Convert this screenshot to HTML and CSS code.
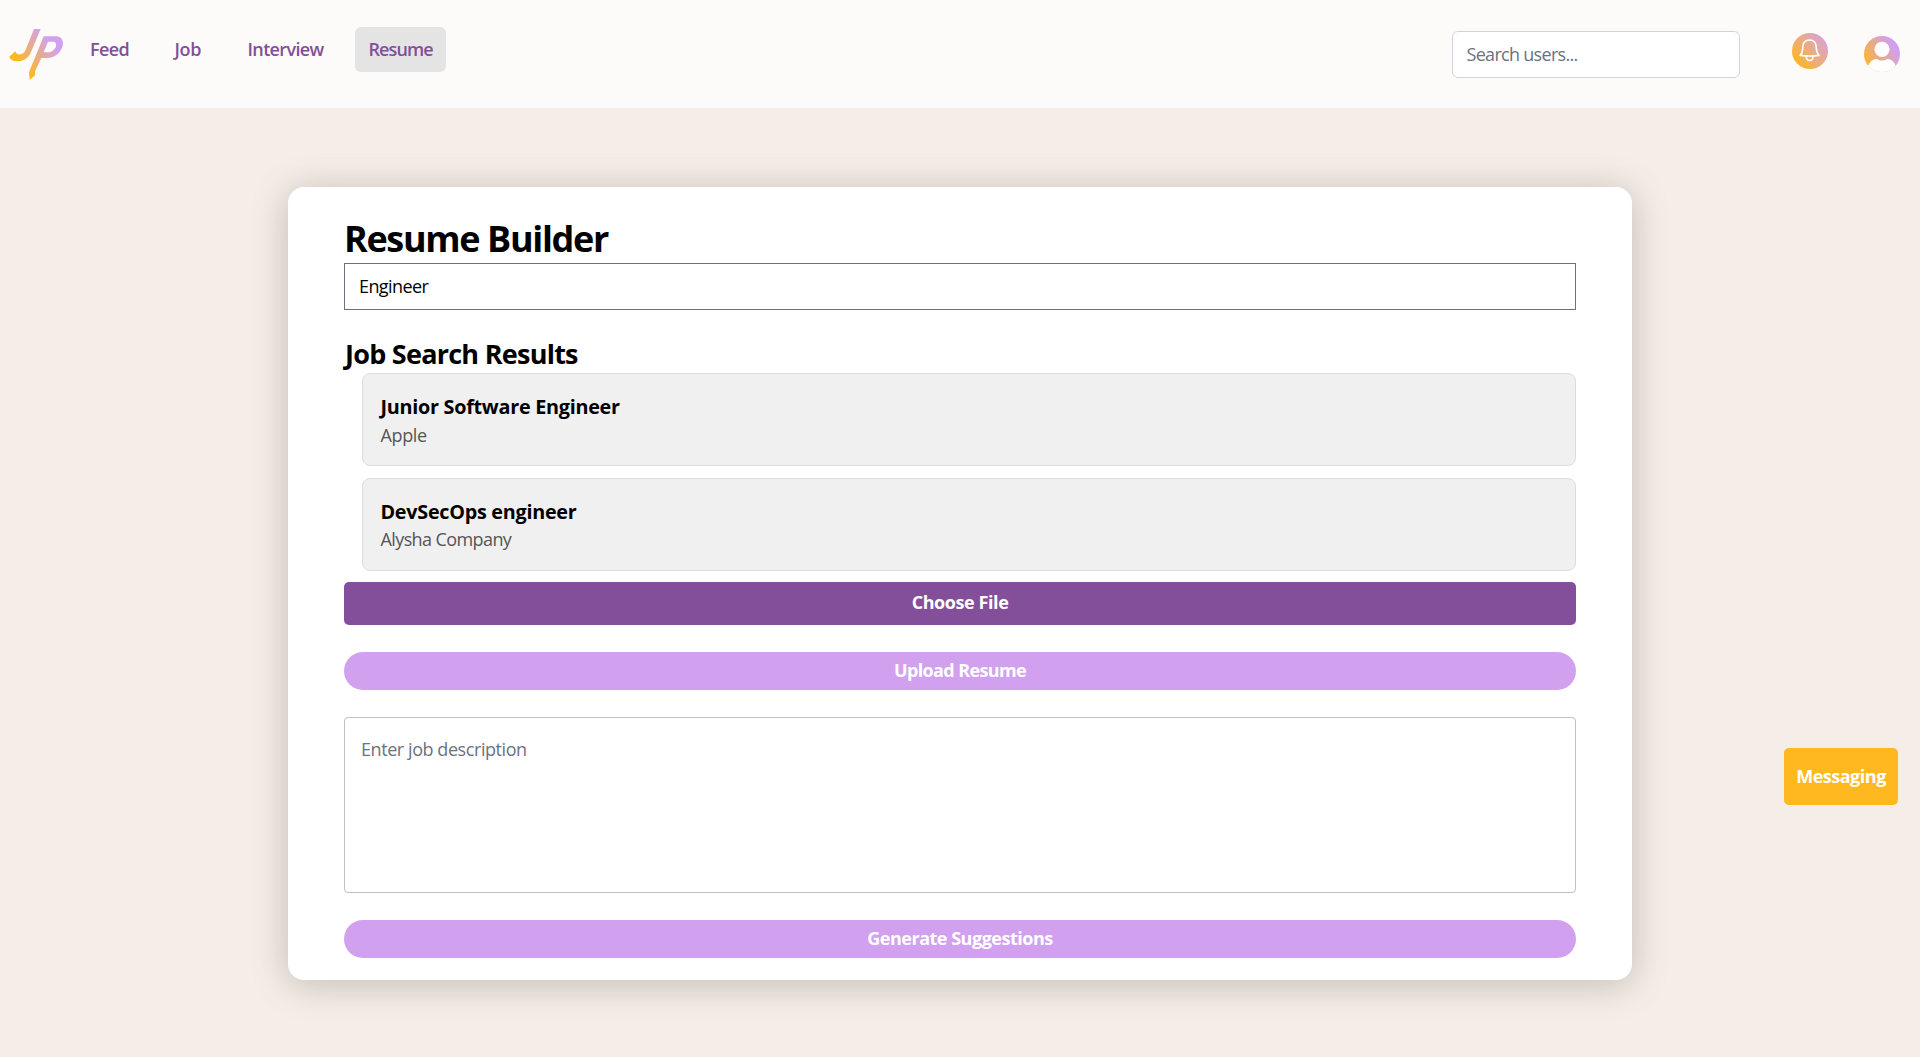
FILE: index.html
```html
<!DOCTYPE html>
<html lang="en">
<head>
<meta charset="utf-8">
<title>Resume Builder</title>
<link rel="stylesheet" href="styles.css">
</head>
<body>
<header class="header">
  <svg class="logo" viewBox="24 84 168 159" aria-label="JP">
    <defs>
      <linearGradient id="logo-fill" gradientUnits="userSpaceOnUse" x1="62" y1="194" x2="148" y2="120">
        <stop offset="0" stop-color="#ffb81f"/><stop offset="1" stop-color="#d1a1f0"/>
      </linearGradient>
    </defs>
    <path fill="url(#logo-fill)" d="M102 87H122L92 158C84 177 66 184 50 184C39 184 31 179 28 170L46 154C50 162 54 164 60 163C69 162 74 156 77 149Z"/>
    <path fill="url(#logo-fill)" fill-rule="evenodd" d="M131 109H168C184 109 192 122 188 138C182 160 162 174 140 174H124L105 214V226L89 240L87 217ZM144 125L131 157H144C157 157 166 147 168 138C170 130 166 125 160 125Z"/>
  </svg>
  <nav class="nav">
    <a class="nav-link nav-feed">Feed</a>
    <a class="nav-link nav-job">Job</a>
    <a class="nav-link nav-interview">Interview</a>
    <a class="nav-link nav-resume active">Resume</a>
  </nav>
  <input class="search" type="text" placeholder="Search users...">
  <svg class="bell" viewBox="0 0 36 36">
    <defs>
      <linearGradient id="bell-fill" x1="0.1" y1="0.85" x2="1" y2="0.1">
        <stop offset="0" stop-color="#ffb524"/><stop offset="1" stop-color="#d5a1e8"/>
      </linearGradient>
    </defs>
    <circle cx="18" cy="18" r="18" fill="url(#bell-fill)"/>
    <path fill="none" stroke="#fff" stroke-width="1.6" stroke-linejoin="round" d="M8.2 22.4C10 20.5 10.7 18.5 10.7 15C10.7 10 13.2 7 17.5 7S24.3 10 24.3 15C24.3 18.5 25.2 20.5 27 22.4C21 23.2 14.2 23.2 8.2 22.4ZM14.3 23.2C14.3 29 21 29 21 23.2"/>
  </svg>
  <svg class="avatar" viewBox="0 0 36 36">
    <defs>
      <linearGradient id="avatar-fill" x1="0" y1="0.8" x2="0.85" y2="0.3">
        <stop offset="0" stop-color="#ffb524"/><stop offset="1" stop-color="#d0a0f0"/>
      </linearGradient>
      <clipPath id="avatar-clip"><circle cx="18" cy="18" r="18"/></clipPath>
    </defs>
    <g clip-path="url(#avatar-clip)">
      <rect width="36" height="36" fill="url(#avatar-fill)"/>
      <path fill="#fff" d="M4 36V31C5 26 9 22.6 13 23C16 25 20 25 23 23C27 22.6 31 26 32 31V36Z"/>
    </g>
    <circle cx="18" cy="13.3" r="7.6" fill="#fff"/>
  </svg>
</header>
<main class="card">
  <h1 class="title">Resume Builder</h1>
  <input class="job-search" type="text" value="Engineer">
  <h2 class="subtitle">Job Search Results</h2>
  <ul class="results">
    <li class="result">
      <h3 class="job-title">Junior Software Engineer</h3>
      <p class="company company-short">Apple</p>
    </li>
    <li class="result">
      <h3 class="job-title">DevSecOps engineer</h3>
      <p class="company">Alysha Company</p>
    </li>
  </ul>
  <button class="choose">Choose File</button>
  <button class="action upload">Upload Resume</button>
  <textarea class="description" placeholder="Enter job description"></textarea>
  <button class="action">Generate Suggestions</button>
</main>
<button class="messaging">Messaging</button>
</body>
</html>
```
FILE: styles.css
```css
* {
  box-sizing: border-box;
  margin: 0;
  padding: 0;
}

body {
  height: 1057px;
  overflow: hidden;
  background: #f5ede7;
  color: #000;
  font: 400 18px/27px "Open Sans", "Noto Sans", sans-serif;
}

button,
input,
textarea {
  font: inherit;
  border: 0;
}

.header {
  display: flex;
  align-items: flex-start;
  height: 108px;
  padding: 27px 20px 0 8px;
  background: #fcfbf9;
}

.logo {
  width: 56px;
  height: 53px;
  margin-top: 1px;
}

.nav {
  display: flex;
  gap: 18px;
  margin-left: 12.5px;
}

.nav-link {
  height: 45px;
  padding: 9px 0 0 13.5px;
  border-radius: 6px;
  color: #834e9a;
  font-weight: 600;
  line-height: 26px;
  letter-spacing: -0.6px;
  white-space: nowrap;
}

.nav-feed { width: 67.5px; }
.nav-job { width: 54px; padding-left: 12.5px; letter-spacing: -0.3px; }
.nav-interview { width: 103px; letter-spacing: -0.65px; }
.nav-resume { width: 91px; letter-spacing: -0.9px; }

.active {
  background: #e4e4e4;
}

.search {
  width: 288px;
  height: 47px;
  margin: 4px 52px 0 auto;
  padding: 0 13.5px 2px;
  border: 1px solid #d1d5db;
  border-radius: 6px;
  background: #fff;
  letter-spacing: -0.7px;
}

.search::placeholder,
.description::placeholder {
  color: #6b7280;
  opacity: 1;
}

.bell {
  width: 36px;
  height: 36px;
  margin: 6px 36px 0 0;
}

.avatar {
  width: 36px;
  height: 36px;
  margin-top: 9px;
}

.card {
  display: flex;
  flex-direction: column;
  width: 1344px;
  height: 792.5px;
  margin: 79px auto 0;
  padding: 31px 56px 0;
  border-radius: 16px;
  background: #fff;
  box-shadow: 0 4px 36px rgba(90, 90, 75, 0.33);
}

.title {
  height: 45px;
  font-size: 36px;
  font-weight: 700;
  line-height: 41px;
  letter-spacing: -1.35px;
}

.job-search {
  height: 47px;
  padding: 0 14px 2px;
  border: 1px solid #6b7280;
  background: #fff;
  color: #000;
  letter-spacing: -0.6px;
}

.subtitle {
  height: 36px;
  margin-top: 27px;
  padding-left: 1px;
  font-size: 27px;
  font-weight: 700;
  line-height: 33px;
  letter-spacing: -0.74px;
}

.results {
  display: flex;
  flex-direction: column;
  gap: 12px;
  margin-left: 18px;
  list-style: none;
}

.result {
  height: 93px;
  padding: 19px 17px 0;
  border: 1px solid #ddd;
  border-radius: 8px;
  background: #f0f0f0;
}

.job-title {
  padding-left: 0.5px;
  font-size: 19.8px;
  font-weight: 700;
  line-height: 28px;
  letter-spacing: -0.27px;
}

.company {
  padding-left: 0.5px;
  color: #555;
  line-height: 27px;
  letter-spacing: -0.6px;
}

.company-short { line-height: 28px; letter-spacing: -0.36px; }

.choose {
  height: 43px;
  margin-top: 11px;
  padding-bottom: 3px;
  border-radius: 5px;
  background: #834e9a;
  color: #fff;
  font-weight: 700;
  letter-spacing: -0.42px;
}

.action {
  flex: none;
  height: 38px;
  margin-top: 27px;
  padding-bottom: 1px;
  border-radius: 19px;
  background: #d1a1f0;
  color: #fff;
  font-weight: 700;
  letter-spacing: -0.49px;
}

.upload { letter-spacing: -0.63px; }

.description {
  flex: none;
  height: 176px;
  margin-top: 27px;
  padding: 18px 16px;
  border: 1px solid #c0c0c0;
  border-radius: 4px;
  background: #fff;
  letter-spacing: -0.43px;
  resize: none;
}

.messaging {
  position: fixed;
  right: 22px;
  top: 748px;
  width: 114px;
  height: 57px;
  border-radius: 5px;
  background: #ffb81f;
  color: #fff;
  font-weight: 700;
  letter-spacing: -0.48px;
}
```
